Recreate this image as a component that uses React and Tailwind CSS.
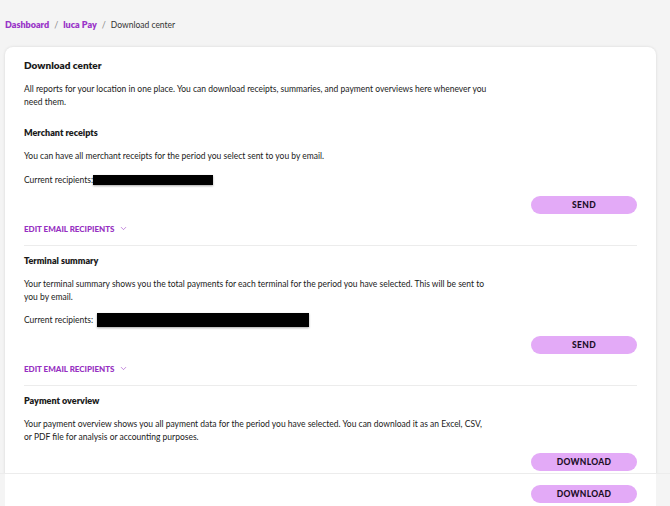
import React from "react";
import { ChevronDown } from "lucide-react";

const Redacted = ({ className }) => (
  <span className={`inline-block bg-black shadow-[0_1px_2px_rgba(0,0,0,0.35)] ${className}`} />
);

const PillButton = ({ children }) => (
  <button className="h-[18px] w-[106px] rounded-full bg-[#e3aaf7] text-[8.5px] font-black tracking-[0.3px] text-[#1b0d26]">
    {children}
  </button>
);

const EditRecipients = () => (
  <button className="mt-[8px] flex h-[13px] items-center gap-[4px] text-[8px] font-black text-[#962fc2]">
    EDIT EMAIL RECIPIENTS
    <ChevronDown size={9} strokeWidth={1.5} />
  </button>
);

export default function App() {
  return (
    <div className="relative min-h-screen bg-[#f4f4f4] font-['Lato',sans-serif] text-[#1a1a1a]">
      {/* breadcrumb */}
      <nav className="flex h-[47px] items-center gap-[5px] pl-[5px] pt-[3px] text-[9px]">
        <a className="font-extrabold text-[#9a34c8]">Dashboard</a>
        <span className="text-[#8a8a8a]">/</span>
        <a className="font-extrabold text-[#9a34c8]">luca Pay</a>
        <span className="text-[#8a8a8a]">/</span>
        <span className="text-[8.5px] text-[#333]">Download center</span>
      </nav>

      <div className="ml-[5px] w-[651px] rounded-t-[8px] bg-white px-[19px] pb-[40px] pt-[11px] shadow-[0_0_3px_rgba(0,0,0,0.12)]">
        <h1 className="text-[10px] font-extrabold leading-[14px]">Download center</h1>
        <p className="mt-[11px] w-[465px] text-[8.5px] leading-[13px]">
          All reports for your location in one place. You can download receipts, summaries, and payment overviews here whenever you
          need them.
        </p>

        {/* Merchant receipts */}
        <h2 className="mt-[17px] text-[9px] font-extrabold leading-[14px]">Merchant receipts</h2>
        <p className="mt-[10px] text-[8.5px] leading-[13px]">
          You can have all merchant receipts for the period you select sent to you by email.
        </p>
        <div className="mt-[10px] flex h-[14px] items-center text-[8.5px]">
          Current recipients:
          <Redacted className="h-[10px] w-[120px]" />
        </div>
        <div className="mt-[9px] flex justify-end">
          <PillButton>SEND</PillButton>
        </div>
        <EditRecipients />
        <div className="mt-[10px] border-t border-[#ececec]" />

        {/* Terminal summary */}
        <h2 className="mt-[8px] text-[9px] font-extrabold leading-[14px]">Terminal summary</h2>
        <p className="mt-[10px] w-[465px] text-[8.5px] leading-[13px]">
          Your terminal summary shows you the total payments for each terminal for the period you have selected. This will be sent to
          you by email.
        </p>
        <div className="mt-[9px] flex h-[14px] items-center gap-[4px] text-[8.5px]">
          Current recipients:
          <Redacted className="h-[14px] w-[212px]" />
        </div>
        <div className="mt-[9px] flex justify-end">
          <PillButton>SEND</PillButton>
        </div>
        <EditRecipients />
        <div className="mt-[10px] border-t border-[#ececec]" />

        {/* Payment overview */}
        <h2 className="mt-[8px] text-[9px] font-extrabold leading-[14px]">Payment overview</h2>
        <p className="mt-[10px] w-[465px] text-[8.5px] leading-[13px]">
          Your payment overview shows you all payment data for the period you have selected. You can download it as an Excel, CSV,
          or PDF file for analysis or accounting purposes.
        </p>
        <div className="mt-[9px] flex justify-end">
          <PillButton>DOWNLOAD</PillButton>
        </div>
      </div>

      {/* sticky footer */}
      <div className="fixed bottom-0 left-0 right-0 h-[33px] border-t border-[#ececec] bg-[#f4f4f4]">
        <div className="ml-[5px] flex h-full w-[651px] justify-end bg-white px-[19px] pt-[11px]">
          <PillButton>DOWNLOAD</PillButton>
        </div>
      </div>
    </div>
  );
}
